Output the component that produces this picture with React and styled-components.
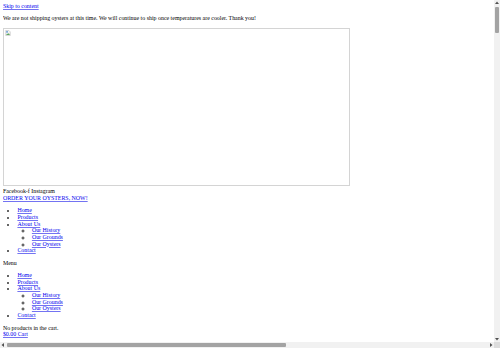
import React from "react";
import styled, { createGlobalStyle } from "styled-components";

const GlobalStyle = createGlobalStyle`
  html,
  body {
    overflow: hidden;
  }

  body {
    margin: 2.9px;
    font-family: "Liberation Serif", "Times New Roman", serif;
    font-size: 5.92px;
    line-height: 6.67px;
    color: #000000;
    background: #ffffff;
  }
`;

const Link = styled.a`
  color: #0000ee;
  text-decoration: underline;
  text-decoration-color: #7373f2;
  text-decoration-thickness: 0.5px;
  text-underline-offset: 0.8px;
  cursor: pointer;
`;

const Notice = styled.p`
  margin: 5.9px 0;
`;

const BrokenImage = styled.div`
  box-sizing: border-box;
  width: 347px;
  height: 158px;
  margin-bottom: 2px;
  border: 1px solid #d4d4d4;
  padding: 1px;

  svg {
    display: block;
  }
`;

const Line = styled.div``;

const NavList = styled.ul`
  margin: 5.8px 0;
  padding-left: 14.5px;
  list-style: disc;
`;

const SubList = styled.ul`
  margin: 0;
  padding-left: 14.5px;
  list-style: circle;
`;

const NavItem = styled.li`
  &::marker {
    color: #333333;
  }
`;

/* the window's scroll bars, drawn over the page edges */
const ScrollTrack = styled.div`
  position: fixed;
  background: #f1f1f1;
  display: flex;
  align-items: center;
  ${({ $vertical }) =>
    $vertical
      ? "top: 0; right: 0; width: 6px; height: 342px; flex-direction: column;"
      : "left: 0; bottom: 0; width: 494px; height: 6px; flex-direction: row;"}
`;

const ScrollCorner = styled.div`
  position: fixed;
  right: 0;
  bottom: 0;
  width: 6px;
  height: 6px;
  background: #dcdcdc;
`;

const ScrollArrow = styled.div`
  flex: none;
  width: 6px;
  height: 6px;
  display: flex;
  align-items: center;
  justify-content: center;
`;

const ScrollThumb = styled.div`
  flex: none;
  background: #a3a3a3;
  border-radius: 1px;
  ${({ $vertical, $size }) =>
    $vertical
      ? `width: 4px; height: ${$size}px; margin-top: 1px;`
      : `height: 3.5px; width: ${$size}px; margin-left: 0.5px;`}
`;

const Spacer = styled.div`
  flex: 1;
`;

const Triangle = ({ dir }) => {
  const points = {
    up: "1,4 3,1.5 5,4",
    down: "1,2 3,4.5 5,2",
    left: "4,1 1.5,3 4,5",
    right: "2,1 4.5,3 2,5",
  };
  return (
    <svg width="6" height="6" viewBox="0 0 6 6">
      <polygon points={points[dir]} fill="#505050" />
    </svg>
  );
};

const BrokenIcon = () => (
  <svg width="6" height="6" viewBox="0 0 16 16">
    <path d="M2 1h8l4 4v10H2z" fill="#f4f4f4" stroke="#9a9a9a" />
    <path d="M3 13l3-4 2 2 2-3 3 5z" fill="#5aa55a" />
    <rect x="3" y="3" width="5" height="4" fill="#6fa0d8" />
  </svg>
);

const menu = [
  { label: "Home" },
  { label: "Products" },
  { label: "About Us", children: ["Our History", "Our Grounds", "Our Oysters"] },
  { label: "Contact" },
];

const Navigation = () => (
  <NavList>
    {menu.map((item) => (
      <NavItem key={item.label}>
        <Link>{item.label}</Link>
        {item.children && (
          <SubList>
            {item.children.map((child) => (
              <NavItem key={child}>
                <Link>{child}</Link>
              </NavItem>
            ))}
          </SubList>
        )}
      </NavItem>
    ))}
  </NavList>
);

const App = () => {
  return (
    <>
      <GlobalStyle />
      <Link>Skip to content</Link>
      <Notice>
        We are not shipping oysters at this time. We will continue to ship once
        temperatures are cooler. Thank you!
      </Notice>
      <BrokenImage>
        <BrokenIcon />
      </BrokenImage>
      <Line>Facebook-f Instagram</Line>
      <Line>
        <Link>ORDER YOUR OYSTERS, NOW!</Link>
      </Line>
      <Navigation />
      <Line>Menu</Line>
      <Navigation />
      <Line>No products in the cart.</Line>
      <Line>
        <Link>$0.00 Cart</Link>
      </Line>

      <ScrollTrack $vertical>
        <ScrollArrow>
          <Triangle dir="up" />
        </ScrollArrow>
        <ScrollThumb $vertical $size={26} />
        <Spacer />
        <ScrollArrow>
          <Triangle dir="down" />
        </ScrollArrow>
      </ScrollTrack>
      <ScrollTrack>
        <ScrollArrow>
          <Triangle dir="left" />
        </ScrollArrow>
        <ScrollThumb $size={279} />
        <Spacer />
        <ScrollArrow>
          <Triangle dir="right" />
        </ScrollArrow>
      </ScrollTrack>
      <ScrollCorner />
    </>
  );
};

export default App;
